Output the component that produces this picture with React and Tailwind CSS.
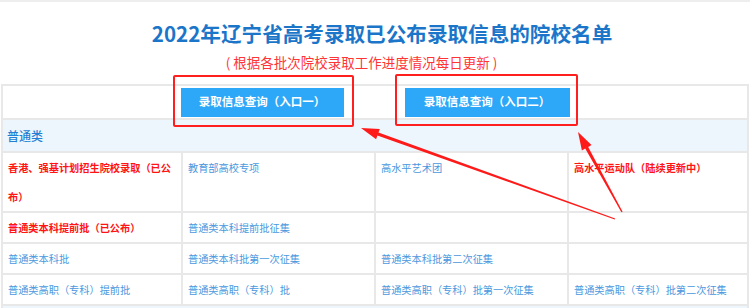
import React from "react";

function arrowPoints(tip, tail, headLen, headHalf, shaftTip, shaftTail) {
  const dx = tip[0] - tail[0];
  const dy = tip[1] - tail[1];
  const len = Math.hypot(dx, dy);
  const ux = dx / len, uy = dy / len;
  const nx = -uy, ny = ux;
  const bx = tip[0] - headLen * ux, by = tip[1] - headLen * uy;
  const pts = [
    [tail[0] + shaftTail * nx, tail[1] + shaftTail * ny],
    [bx + shaftTip * nx, by + shaftTip * ny],
    [bx + headHalf * nx, by + headHalf * ny],
    [tip[0], tip[1]],
    [bx - headHalf * nx, by - headHalf * ny],
    [bx - shaftTip * nx, by - shaftTip * ny],
    [tail[0] - shaftTail * nx, tail[1] - shaftTail * ny],
  ];
  return pts.map((p) => p[0].toFixed(1) + "," + p[1].toFixed(1)).join(" ");
}

function Cell({ children, red, className = "" }) {
  return (
    <div
      className={
        "bg-white px-[5px] text-[10.2px] leading-[29px] " +
        (red ? "text-[#ff1414] font-bold " : "text-[#4a98de] ") +
        className
      }
    >
      {children}
    </div>
  );
}

export default function App() {
  return (
    <div className="relative w-[750px] h-[308px] overflow-hidden bg-white font-['Noto_Sans_CJK_SC','Noto_Sans',sans-serif]">
      <div className="h-[2px] bg-[#eeeeee]" />
      <div className="pt-[17px] pl-[14px] text-center text-[20.6px] leading-[28px] font-bold text-[#1b76c9]">
        2022年辽宁省高考录取已公布录取信息的院校名单
      </div>
      <div className="mt-[5px] pr-[27px] text-center text-[13.5px] leading-[20px] text-[#ff3535]">
        ( 根据各批次院校录取工作进度情况每日更新 )
      </div>

      <div className="mt-[12px] ml-[1px] w-[748px] grid grid-cols-[178px_191px_191px_1fr] gap-[2px] p-[2px] bg-[#e8e8e8]">
        <div className="col-span-4 h-[32px] bg-white flex items-center justify-center gap-[61px]">
          <div className="w-[163px] h-[29px] bg-[#2da7f7] flex items-center justify-center text-white font-bold text-[11.5px]">
            录取信息查询（入口一）
          </div>
          <div className="w-[165px] h-[29px] bg-[#2da7f7] flex items-center justify-center text-white font-bold text-[11.5px]">
            录取信息查询（入口二）
          </div>
        </div>

        <div className="col-span-4 h-[31px] bg-[#eef6fd] px-[4px] flex items-center text-[12px] text-[#237fd3] font-medium">
          普通类
        </div>

        <Cell red className="h-[58px]">香港、强基计划招生院校录取（已公布）</Cell>
        <Cell className="h-[58px]">教育部高校专项</Cell>
        <Cell className="h-[58px]">高水平艺术团</Cell>
        <Cell red className="h-[58px]">高水平运动队（陆续更新中）</Cell>

        <Cell red className="h-[29px]">普通类本科提前批（已公布）</Cell>
        <Cell className="h-[29px]">普通类本科提前批征集</Cell>
        <Cell className="h-[29px]"></Cell>
        <Cell className="h-[29px]"></Cell>

        <Cell className="h-[29px]">普通类本科批</Cell>
        <Cell className="h-[29px]">普通类本科批第一次征集</Cell>
        <Cell className="h-[29px]">普通类本科批第二次征集</Cell>
        <Cell className="h-[29px]"></Cell>

        <Cell className="h-[29px]">普通类高职（专科）提前批</Cell>
        <Cell className="h-[29px]">普通类高职（专科）批</Cell>
        <Cell className="h-[29px]">普通类高职（专科）批第一次征集</Cell>
        <Cell className="h-[29px]">普通类高职（专科）批第二次征集</Cell>

        <div className="col-span-4 h-[31px] bg-[#eef6fd]" />
      </div>

      {/* annotation boxes */}
      <div className="absolute left-[173px] top-[75px] w-[181px] h-[52px] border-2 border-[#ff1f1f] rounded-[2px]" />
      <div className="absolute left-[395px] top-[74px] w-[183px] h-[52px] border-2 border-[#ff1f1f] rounded-[2px]" />

      <svg className="absolute left-0 top-0 pointer-events-none" width="750" height="308" viewBox="0 0 750 308">
        <polygon points={arrowPoints([361, 128], [615, 219], 18, 5.5, 1.6, 0.6)} fill="#ff1a1a" />
        <polygon points={arrowPoints([578, 132], [622, 212], 18, 5.5, 1.7, 0.7)} fill="#ff1a1a" />
      </svg>
    </div>
  );
}
